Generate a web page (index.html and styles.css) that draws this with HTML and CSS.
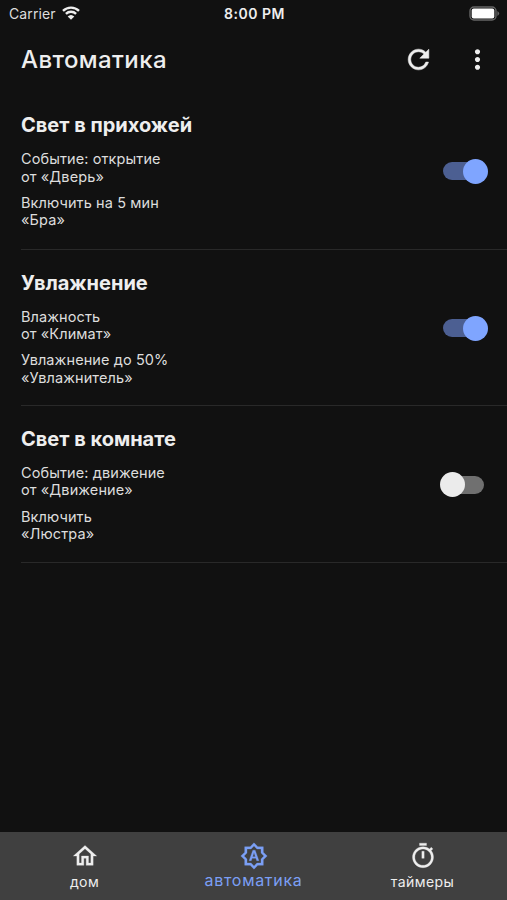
FILE: index.html
```html
<!DOCTYPE html>
<html lang="ru">

<head>
    <meta charset="UTF-8">
    <meta name="viewport" content="width=device-width, initial-scale=1.0">
    <title>Автоматика</title>
    <link rel="stylesheet" href="styles.css">
</head>

<body>
    <div class="status-bar">
        <div class="carrier">
            <span>Carrier</span>
            <svg class="wifi" viewBox="0 0 18 14">
                <path d="M1 4.9a11.5 11.5 0 0 1 16 0M3.9 7.9a7.3 7.3 0 0 1 10.2 0" />
                <path class="wifi-dot" d="M9 13.8L5.7 10.5a4.8 4.8 0 0 1 6.6 0z" />
            </svg>
        </div>
        <div class="clock">8:00 PM</div>
        <div class="battery-box">
            <svg class="battery" viewBox="0 0 31 15">
                <rect x="1" y="1" width="26" height="13" rx="4" fill="none" stroke="#666" stroke-width="1.4" />
                <rect x="2.7" y="2.5" width="22.6" height="10" rx="2" fill="#fff" />
                <path d="M28.4 5q3.6 2.5 0 5z" fill="#666" />
            </svg>
        </div>
    </div>

    <header class="toolbar">
        <h1>Автоматика</h1>
        <button class="icon-button refresh" aria-label="Обновить">
            <svg viewBox="0 0 24 24">
                <path d="M17.65 6.35C16.2 4.9 14.21 4 12 4c-4.42 0-7.99 3.58-7.99 8s3.57 8 7.99 8c3.73 0 6.84-2.55 7.73-6h-2.08c-.82 2.33-3.04 4-5.65 4-3.31 0-6-2.69-6-6s2.69-6 6-6c1.66 0 3.14.69 4.22 1.78L13 11h7V4l-2.35 2.35z" />
            </svg>
        </button>
        <button class="icon-button" aria-label="Меню">
            <svg viewBox="0 0 24 24">
                <path d="M12 8c1.1 0 2-.9 2-2s-.9-2-2-2-2 .9-2 2 .9 2 2 2zm0 2c-1.1 0-2 .9-2 2s.9 2 2 2 2-.9 2-2-.9-2-2-2zm0 6c-1.1 0-2 .9-2 2s.9 2 2 2 2-.9 2-2-.9-2-2-2z" />
            </svg>
        </button>
    </header>

    <main>
        <section class="rule">
            <div class="info">
                <h2>Свет в прихожей</h2>
                <p>Событие: открытие<br>от «Дверь»</p>
                <p>Включить на 5 мин<br>«Бра»</p>
            </div>
            <div class="switch on"><span class="track"></span><span class="thumb"></span></div>
        </section>
        <section class="rule">
            <div class="info">
                <h2>Увлажнение</h2>
                <p>Влажность<br>от «Климат»</p>
                <p>Увлажнение до 50%<br>«Увлажнитель»</p>
            </div>
            <div class="switch on"><span class="track"></span><span class="thumb"></span></div>
        </section>
        <section class="rule">
            <div class="info">
                <h2>Свет в комнате</h2>
                <p>Событие: движение<br>от «Движение»</p>
                <p>Включить<br>«Люстра»</p>
            </div>
            <div class="switch"><span class="track"></span><span class="thumb"></span></div>
        </section>
    </main>

    <nav class="tabs">
        <div class="tab">
            <svg viewBox="0 0 24 24">
                <path d="M12 5.69l5 4.5V18h-2v-6H9v6H7v-7.81l5-4.5M12 3L2 12h3v8h6v-6h2v6h6v-8h3L12 3z" />
            </svg>
            <span>дом</span>
        </div>
        <div class="tab active">
            <svg viewBox="0 0 24 24">
                <path d="M11 7l-3.2 9h1.9l.7-2h3.2l.7 2h1.9L13 7h-2zm-.15 5.65L12 9l1.15 3.65h-2.3zM20 8.69V4h-4.69L12 .69 8.69 4H4v4.69L.69 12 4 15.31V20h4.69L12 23.31 15.31 20H20v-4.69L23.31 12 20 8.69zm-2 5.79V18h-3.52L12 20.48 9.52 18H6v-3.52L3.52 12 6 9.52V6h3.52L12 3.52 14.48 6H18v3.52L20.48 12 18 14.48z" />
            </svg>
            <span>автоматика</span>
        </div>
        <div class="tab">
            <svg viewBox="0 0 24 24">
                <path d="M15 1H9v2h6V1zm-4 13h2V8h-2v6zm8.03-6.61l1.42-1.42c-.43-.51-.9-.99-1.41-1.41l-1.42 1.42C16.07 4.74 14.12 4 12 4c-4.97 0-9 4.03-9 9s4.02 9 9 9 9-4.03 9-9c0-2.12-.74-4.07-1.97-5.61zM12 20c-3.87 0-7-3.13-7-7s3.13-7 7-7 7 3.13 7 7-3.13 7-7 7z" />
            </svg>
            <span>таймеры</span>
        </div>
    </nav>
</body>

</html>
```
FILE: styles.css
```css
body {
    font-family: Inter, Roboto, sans-serif;
    background-color: #111;
    color: #eee;
    margin: 0;
    height: 100vh;
    display: flex;
    flex-direction: column;
    overflow: hidden;
}

svg {
    display: block;
    fill: currentColor;
}

.status-bar {
    height: 27px;
    padding: 0 7px 0 9px;
    display: grid;
    grid-template-columns: 1fr auto 1fr;
    align-items: center;
    font-size: 14px;
}

.carrier {
    display: flex;
    align-items: center;
    gap: 6px;
    color: #ddd;
    letter-spacing: 0.1px;
}

.wifi {
    width: 18px;
    height: 14px;
    margin-top: -2px;
    fill: none;
    stroke: #eee;
    stroke-width: 2.4;
}

.wifi-dot {
    fill: #eee;
    stroke: none;
}

.clock {
    font-weight: 600;
    letter-spacing: 0.5px;
}

.battery-box {
    display: flex;
    justify-content: flex-end;
}

.battery {
    width: 31px;
    height: 15px;
}

.toolbar {
    height: 65px;
    padding: 0 14px 0 21px;
    display: flex;
    align-items: center;
    gap: 28px;
}

h1 {
    flex: 1;
    margin: 0;
    font-size: 24px;
    font-weight: 500;
    letter-spacing: 0.4px;
}

.icon-button {
    background: none;
    border: none;
    padding: 0;
    color: #eee;
}

.icon-button svg {
    width: 31px;
    height: 31px;
}

.refresh path {
    stroke: currentColor;
    stroke-width: 0.4;
}

main {
    flex: 1;
}

.rule {
    height: 156.4px;
    box-sizing: border-box;
    margin-left: 21px;
    padding: 1px 19px 0 0;
    border-bottom: 1px solid #292929;
    display: flex;
    justify-content: space-between;
    align-items: center;
}

main .rule:first-child {
    height: 158px;
}

h2 {
    margin: 0 0 13px;
    font-size: 20px;
    line-height: 24px;
    font-weight: 700;
    letter-spacing: 0;
}

p {
    margin: 0 0 9.5px;
    font-size: 14.5px;
    line-height: 17.2px;
    letter-spacing: 0.1px;
    color: #ddd;
}

.info p:last-child {
    margin-bottom: 0;
}

.switch {
    width: 48px;
    height: 25px;
    display: grid;
    align-items: center;
}

.track,
.thumb {
    grid-area: 1 / 1;
}

.track {
    width: 39px;
    height: 18px;
    margin-left: 5px;
    border-radius: 9px;
    background-color: #707070;
}

.thumb {
    width: 25px;
    height: 25px;
    border-radius: 50%;
    background-color: #ebebeb;
}

.on .track {
    margin-left: 3px;
    background-color: #4c5f92;
}

.on .thumb {
    justify-self: end;
    background-color: #7fa5ff;
}

.tabs {
    height: 68px;
    background-color: #404040;
    display: grid;
    grid-template-columns: repeat(3, 1fr);
}

.tab {
    display: flex;
    flex-direction: column;
    align-items: center;
    padding-top: 10px;
    font-size: 14px;
    line-height: 18px;
    letter-spacing: 0.4px;
}

.tab svg {
    width: 28px;
    height: 28px;
    margin-bottom: 3px;
    stroke: currentColor;
    stroke-width: 0.25;
}

.active {
    color: #7b9ff5;
    font-size: 16px;
    letter-spacing: 0.7px;
}

.active span {
    margin-top: -2px;
}
```
